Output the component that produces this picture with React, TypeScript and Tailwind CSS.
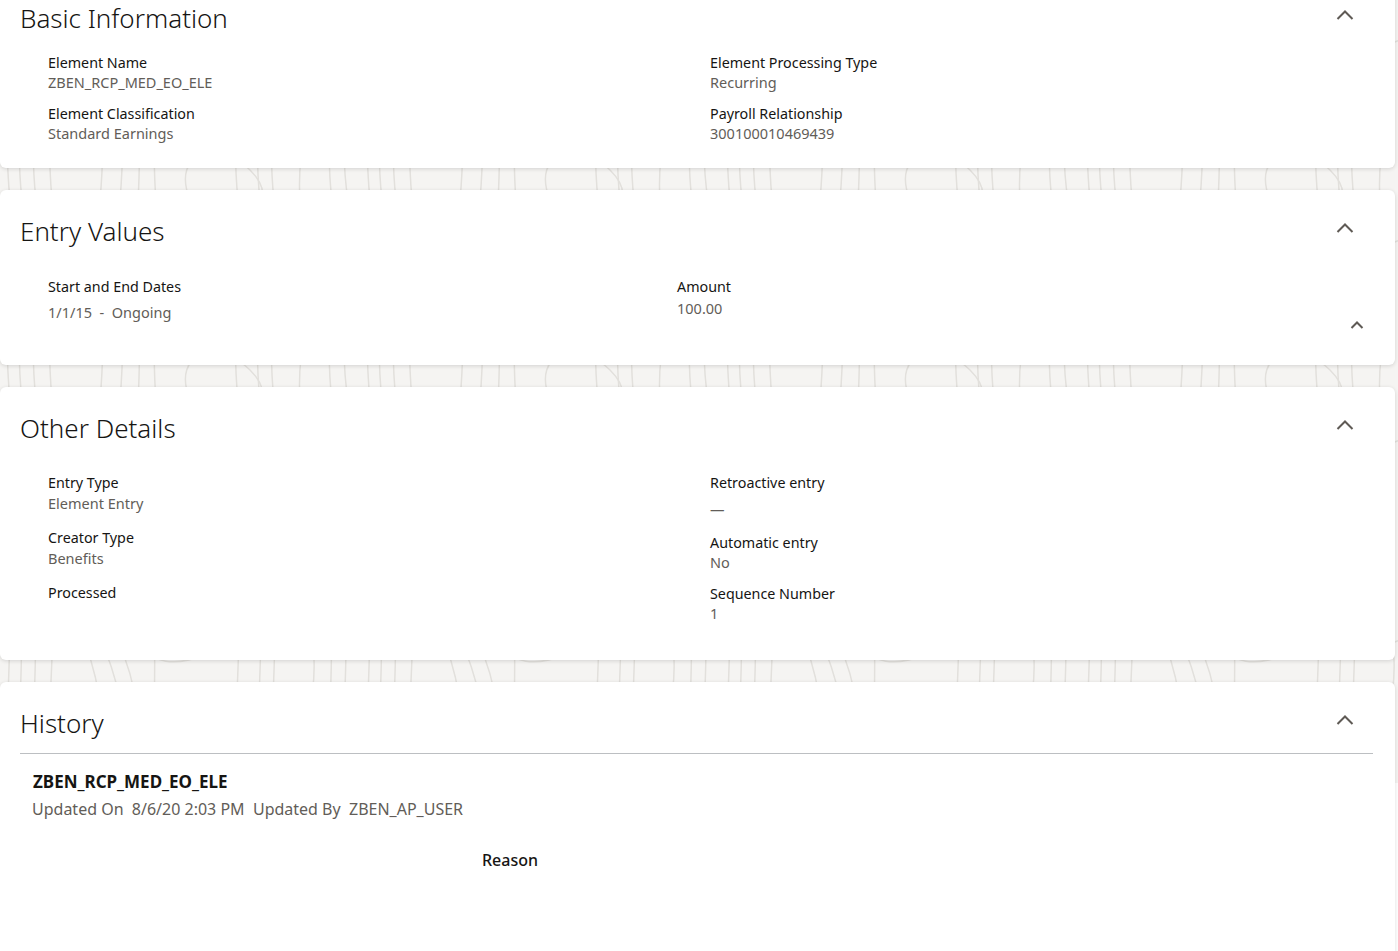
import React from 'react';

const font = { fontFamily: '"Noto Sans", "Open Sans", Arial, sans-serif' };

const Chevron: React.FC<{ small?: boolean }> = ({ small }) => (
  <svg
    width={small ? 14 : 18}
    height={small ? 8 : 10}
    viewBox={small ? '0 0 14 8' : '0 0 18 10'}
    fill="none"
    stroke="#5f5a55"
    strokeWidth={2}
  >
    {small ? <path d="M1.5 7 L7 1.5 L12.5 7" /> : <path d="M1.5 9 L9 1.5 L16.5 9" />}
  </svg>
);

// topographic background lines
const Pattern: React.FC = () => (
  <svg className="absolute left-0 top-0 w-full h-[783px]" aria-hidden>
    <defs>
      <pattern id="topo" width="360" height="200" patternUnits="userSpaceOnUse">
        <g fill="none" stroke="#e2e0dc" strokeWidth="1.5">
          <path d="M8 0 C 14 50, 2 120, 10 200" />
          <path d="M20 0 C 26 60, 14 130, 22 200" />
          <path d="M34 0 C 40 60, 28 130, 36 200" />
          <path d="M50 0 C 58 40, 44 110, 52 200" />
          <path d="M70 0 C 90 60, 110 90, 100 200" />
          <path d="M85 0 C 110 70, 130 80, 120 200" />
          <path d="M100 0 C 125 60, 145 80, 138 200" />
          <path d="M150 0 C 160 40, 150 130, 156 200" />
          <path d="M175 0 C 140 20, 150 60, 200 40 C 240 20, 230 0, 210 0" />
          <path d="M165 0 C 125 30, 140 80, 205 55 C 255 30, 245 0, 225 0" />
          <path d="M190 200 C 170 150, 220 140, 250 170 C 270 190, 260 200, 262 200" />
          <path d="M236 0 C 244 60, 230 120, 238 200" />
          <path d="M258 0 C 266 60, 252 130, 260 200" />
          <path d="M272 0 C 280 60, 266 130, 274 200" />
          <path d="M290 0 C 280 30, 300 50, 320 40 C 340 30, 330 10, 330 0" />
          <path d="M300 200 C 296 140, 316 110, 314 60 C 312 30, 300 20, 304 0" />
          <path d="M330 0 C 336 60, 324 140, 332 200" />
          <path d="M345 0 C 350 60, 338 140, 348 200" />
        </g>
      </pattern>
    </defs>
    <rect width="100%" height="100%" fill="url(#topo)" />
  </svg>
);

const Card: React.FC<{ title: string; children: React.ReactNode; className?: string }> = ({
  title,
  children,
  className = '',
}) => (
  <section
    className={`relative bg-white rounded-md shadow-[0_1px_4px_rgba(0,0,0,0.14)] w-[1395px] ${className}`}
  >
    <div className="flex items-start justify-between pl-5 pr-[41px] pt-[23px]">
      <h2 className="text-[26px] leading-[36px] font-light text-[#161513]">{title}</h2>
      <div className="pt-[10px]">
        <Chevron />
      </div>
    </div>
    {children}
  </section>
);

const Label: React.FC<{ children: React.ReactNode }> = ({ children }) => (
  <div className="relative top-px text-[14.3px] leading-5 text-[#161513]">{children}</div>
);

const Value: React.FC<{ children: React.ReactNode; className?: string }> = ({ children, className = '' }) => (
  <div className={`text-[14.5px] leading-5 text-[#625d58] ${className}`}>{children}</div>
);

export default function App() {
  return (
    <div style={font} className="relative h-[951px] w-[1398px] overflow-hidden bg-white">
      <div className="absolute left-0 top-0 w-full h-[783px] bg-[#f5f4f2]" />
      <Pattern />
      <div className="relative flex flex-col gap-[22px] -mt-[23px]">
        {/* Basic Information */}
        <Card title="Basic Information" className="h-[191px]">
          <div className="grid grid-cols-[662px_1fr] pl-12 pt-4">
            <div className="flex flex-col gap-[11px]">
              <div>
                <Label>Element Name</Label>
                <Value>ZBEN_RCP_MED_EO_ELE</Value>
              </div>
              <div>
                <Label>Element Classification</Label>
                <Value>Standard Earnings</Value>
              </div>
            </div>
            <div className="flex flex-col gap-[11px]">
              <div>
                <Label>Element Processing Type</Label>
                <Value>Recurring</Value>
              </div>
              <div>
                <Label>Payroll Relationship</Label>
                <Value>300100010469439</Value>
              </div>
            </div>
          </div>
        </Card>

        {/* Entry Values */}
        <Card title="Entry Values" className="h-[175px]">
          <div className="grid grid-cols-[629px_1fr] pl-12 pt-[27px]">
            <div>
              <Label>Start and End Dates</Label>
              <Value className="mt-[6px]">1/1/15&nbsp;&nbsp;-&nbsp;&nbsp;Ongoing</Value>
            </div>
            <div>
              <Label>Amount</Label>
              <Value className="mt-[2px]">100.00</Value>
            </div>
          </div>
          <div className="flex justify-end pr-[31px] -mt-[1px]">
            <Chevron small />
          </div>
        </Card>

        {/* Other Details */}
        <Card title="Other Details" className="h-[273px]">
          <div className="grid grid-cols-[662px_1fr] pl-12 pt-[26px]">
            <div className="flex flex-col gap-[13px]">
              <div>
                <Label>Entry Type</Label>
                <Value className="leading-[22px]">Element Entry</Value>
              </div>
              <div>
                <Label>Creator Type</Label>
                <Value className="leading-[22px]">Benefits</Value>
              </div>
              <div>
                <Label>Processed</Label>
              </div>
            </div>
            <div className="flex flex-col gap-[13px]">
              <div>
                <Label>Retroactive entry</Label>
                <Value className="mt-[7px]">—</Value>
              </div>
              <div>
                <Label>Automatic entry</Label>
                <Value>No</Value>
              </div>
              <div className="-mt-[2px]">
                <Label>Sequence Number</Label>
                <Value>1</Value>
              </div>
            </div>
          </div>
        </Card>

        {/* History */}
        <Card title="History" className="h-[300px]">
          <div className="ml-5 mr-[22px] mt-3 border-t border-[#bcbfc2]" />
          <div className="pl-[33px] pt-[17px]">
            <div className="text-[17px] leading-[22px] font-bold text-[#161513]">ZBEN_RCP_MED_EO_ELE</div>
            <div className="mt-[5px] text-[16px] leading-[22px] text-[#625d58] -ml-[1px]">
              Updated On&nbsp; 8/6/20 2:03 PM&nbsp; Updated By&nbsp; ZBEN_AP_USER
            </div>
          </div>
          <div className="pl-[482px] pt-[29px] text-[16px] leading-[22px] font-medium text-[#161513]">
            Reason
          </div>
        </Card>
      </div>
    </div>
  );
}
